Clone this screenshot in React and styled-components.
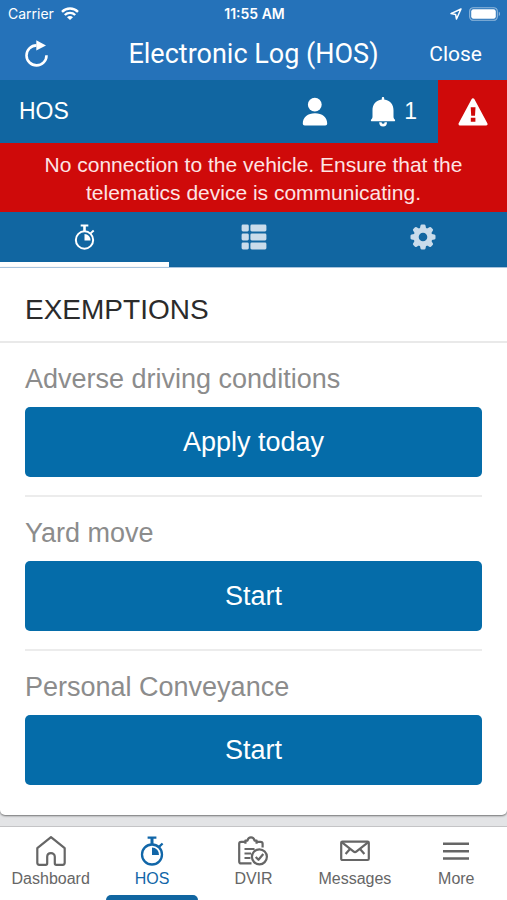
import { useState } from 'react';
import styled, { createGlobalStyle } from 'styled-components';

const exemptions = [
  { id: 'adverse', label: 'Adverse driving conditions', action: 'Apply today' },
  { id: 'yard', label: 'Yard move', action: 'Start' },
  { id: 'personal', label: 'Personal Conveyance', action: 'Start' }
];

const WifiIcon = () => (
  <svg width="18" height="13" viewBox="0 0 18 13" fill="none" stroke="#fff" strokeWidth="2.4" aria-hidden="true">
    <path d="M1 4.800a11.400 11.400 0 0 1 16 0" />
    <path d="M3.800 8a7.400 7.400 0 0 1 10.400 0" />
    <path d="M9 13 6 10.200a4.200 4.200 0 0 1 6 0z" fill="#fff" stroke="none" />
  </svg>
);

const LocationIcon = () => (
  <svg width="12" height="12" viewBox="0 0 12 12" fill="none" stroke="#fff" strokeWidth="1.5" strokeLinejoin="round" aria-hidden="true">
    <path d="M11 1 1 5.6l4.600.8.9 4.600z" />
  </svg>
);

const BatteryIcon = () => (
  <svg width="32" height="14" viewBox="0 0 32 14" aria-hidden="true">
    <rect x=".7" y=".7" width="27.6" height="12.6" rx="3.6" fill="none" stroke="#fff" strokeOpacity=".5" strokeWidth="1.1" />
    <rect x="2.2" y="2.2" width="24.6" height="9.6" rx="2.2" fill="#fff" />
    <path d="M29.8 4.8v4.4c1.6-.6 1.6-3.8 0-4.4z" fill="#fff" fillOpacity=".5" />
  </svg>
);

const ReloadIcon = () => (
  <svg width="24" height="28" viewBox="0 0 24 28" aria-hidden="true">
    <path d="M21.5 15.200A10 10 0 1 1 11.500 5.400" fill="none" stroke="#fff" strokeWidth="2.6" />
    <path d="M11.300.2 21 5.400 11.300 10.600z" fill="#fff" />
  </svg>
);

const PersonIcon = () => (
  <svg width="26" height="30" viewBox="0 0 26 30" fill="#fff" aria-hidden="true">
    <circle cx="12.800" cy="7.700" r="6.900" />
    <path d="M.8 26.600c0-6.600 5-10.400 12.200-10.400s12.200 3.800 12.200 10.400c0 1.300-.7 2-2 2H2.800c-1.300 0-2-.7-2-2z" />
  </svg>
);

const BellIcon = () => (
  <svg width="26" height="30" viewBox="0 0 26 30" fill="#fff" aria-hidden="true">
    <path d="M13 0c.7 0 1.200.5 1.200 1.200v1.200c6 .8 9.300 5 9.300 10.800v6.200c0 1.300.5 2.200 1.300 3 .7.800.3 1.800-.8 1.800H2c-1.100 0-1.500-1-.8-1.800.8-.8 1.300-1.700 1.300-3v-6.200c0-5.800 3.300-10 9.300-10.800V1.200C11.800.5 12.300 0 13 0z" />
    <path d="M9.200 25.200a3.900 4.200 0 0 0 7.800 0h-2.400a1.500 1.500 0 0 1-3 0z" />
  </svg>
);

const WarningIcon = () => (
  <svg width="30" height="28" viewBox="0 0 30 28" aria-hidden="true">
    <path d="M15 1.800 28 26H2z" fill="#fff" stroke="#fff" strokeWidth="3" strokeLinejoin="round" />
    <path d="M12.700 9.200h4.800l-.5 8.600h-3.800zM12.800 19.700h4.600v4h-4.600z" fill="#cf0a0a" />
  </svg>
);

const StopwatchIcon = ({ width, height }) => (
  <svg width={width} height={height} viewBox="0 0 24 30" fill="none" stroke="currentColor" strokeWidth="2.300" aria-hidden="true">
    <circle cx="12" cy="18.500" r="10" />
    <path d="M7.600 1.700h8.800M19 10.800l3.600-3.300" />
    <path d="M12 1.700v7" strokeWidth="3" />
    <path d="M12 11.500a7 7 0 0 1 7 7.500h-7z" fill="currentColor" stroke="none" />
  </svg>
);

const ListIcon = () => (
  <svg width="26" height="26" viewBox="0 0 26 26" fill="currentColor" aria-hidden="true">
    {[0.5, 9.5, 18.5].map(y => (
      <g key={y}>
        <rect x=".6" y={y} width="7.2" height="7" rx="1.400" />
        <rect x="9.4" y={y} width="16" height="7" rx="1.400" />
      </g>
    ))}
  </svg>
);

const GearIcon = () => (
  <svg width="26" height="26" viewBox="-13 -13 26 26" fill="currentColor" aria-hidden="true">
    <circle r="6.900" fill="none" stroke="currentColor" strokeWidth="5.200" />
    {[0, 45, 90, 135, 180, 225, 270, 315].map(angle => (
      <path key={angle} d="M-3.300-7.500-2.500-11.400Q-2.300-12.500-1.200-12.500H1.200Q2.300-12.500 2.500-11.400L3.300-7.500z" transform={`rotate(${angle})`} />
    ))}
  </svg>
);

const HomeIcon = () => (
  <svg width="30" height="30" viewBox="0 0 30 30" fill="none" stroke="currentColor" strokeWidth="2.2" strokeLinejoin="round" aria-hidden="true">
    <path d="M15 1.200 1.300 12.200v14.600c0 1.200.7 2 2 2h6.400c1 0 1.500-.6 1.500-1.500v-6.500c0-5 7.600-5 7.600 0v6.500c0 .9.500 1.500 1.500 1.500h6.400c1.300 0 2-.8 2-2V12.200z" />
  </svg>
);

const ClipboardIcon = () => (
  <svg width="30" height="30" viewBox="0 0 30 30" fill="none" stroke="currentColor" strokeWidth="2.2" strokeLinejoin="round" aria-hidden="true">
    <path d="M13.500 27.400H3.200c-1.200 0-2-.8-2-2V7.600c0-1.200.7-1.800 2-1.800h4.200V4.600h2c1.200-4.400 6-4.400 7.200 0h2v1.200h4c1.300 0 2 .6 2 1.800v4" />
    <path d="M7.400 5.800v2M18.600 5.800v2" />
    <path d="M6.500 13h10M6.500 17.500h6.500M6.500 22h6" />
    <circle cx="21.400" cy="20.800" r="7.500" />
    <path d="m17.700 21 2.800 2.800 4.800-5.800" />
  </svg>
);

const EnvelopeIcon = () => (
  <svg width="30" height="30" viewBox="0 0 30 30" fill="none" stroke="currentColor" strokeWidth="2.2" strokeLinejoin="round" aria-hidden="true">
    <rect x="1.200" y="5.600" width="27.600" height="18.400" rx="1.200" />
    <path d="m2 6.400 11.400 9c1.100.9 2.100.9 3.200 0L28 6.400M5.600 18l4.600-5.200M24.400 18l-4.600-5.200" />
  </svg>
);

const MenuIcon = () => (
  <svg width="30" height="30" viewBox="0 0 30 30" stroke="currentColor" strokeWidth="2.400" aria-hidden="true">
    <path d="M2 7.700h26M2 15.200h26M2 22.500h26" />
  </svg>
);

const tabs = [
  { id: 'exemptions', label: 'Exemptions', icon: <StopwatchIcon width={21} height={26} /> },
  { id: 'logs', label: 'Logs', icon: <ListIcon /> },
  { id: 'settings', label: 'Settings', icon: <GearIcon /> }
];

const navItems = [
  { label: 'Dashboard', icon: <HomeIcon /> },
  { label: 'HOS', icon: <StopwatchIcon width={24} height={30} />, active: true },
  { label: 'DVIR', icon: <ClipboardIcon /> },
  { label: 'Messages', icon: <EnvelopeIcon /> },
  { label: 'More', icon: <MenuIcon /> }
];

const App = () => {
  const [activeTab, setActiveTab] = useState('exemptions');

  return (
    <Page>
      <GlobalStyle />
      <TopArea>
        <StatusBar>
          <StatusGroup>
            Carrier <WifiIcon />
          </StatusGroup>
          <Clock>11:55 AM</Clock>
          <StatusGroup $end>
            <LocationIcon />
            <BatteryIcon />
          </StatusGroup>
        </StatusBar>
        <TitleBar>
          <IconButton aria-label="Reload">
            <ReloadIcon />
          </IconButton>
          <AppTitle>Electronic Log (HOS)</AppTitle>
          <CloseButton>Close</CloseButton>
        </TitleBar>
      </TopArea>

      <HosBar>
        <HosTitle>HOS</HosTitle>
        <HosActions>
          <IconButton aria-label="Driver">
            <PersonIcon />
          </IconButton>
          <IconButton aria-label="Notifications">
            <BellIcon /> 1
          </IconButton>
        </HosActions>
        <WarningButton aria-label="Warnings">
          <WarningIcon />
        </WarningButton>
      </HosBar>

      <Alert role="alert">
        No connection to the vehicle. Ensure that the telematics device is communicating.
      </Alert>

      <Tabs>
        {tabs.map(tab => (
          <Tab
            key={tab.id}
            aria-label={tab.label}
            $active={tab.id === activeTab}
            onClick={() => setActiveTab(tab.id)}
          >
            {tab.icon}
          </Tab>
        ))}
      </Tabs>

      <Content>
        <Card>
          <CardTitle>EXEMPTIONS</CardTitle>
          <CardBody>
            {exemptions.map(item => (
              <Exemption key={item.id}>
                <ExemptionLabel id={item.id}>{item.label}</ExemptionLabel>
                <ActionButton aria-describedby={item.id}>{item.action}</ActionButton>
              </Exemption>
            ))}
          </CardBody>
        </Card>
      </Content>

      <BottomNav>
        {navItems.map(item => (
          <NavLink key={item.label} href="#" $active={item.active}>
            {item.icon}
            {item.label}
          </NavLink>
        ))}
      </BottomNav>
    </Page>
  );
};

const GlobalStyle = createGlobalStyle`
  * {
    box-sizing: border-box;
  }

  body {
    margin: 0;
    font-family: 'Liberation Sans', Arial, sans-serif;
  }

  button {
    margin: 0;
    padding: 0;
    border: 0;
    background: none;
    color: inherit;
    font: inherit;
    cursor: pointer;
  }

  svg {
    display: block;
    flex: none;
  }
`;

const Page = styled.div`
  min-height: 100vh;
  display: flex;
  flex-direction: column;
  background: #e3e4e6;
`;

const TopArea = styled.header`
  background: #2572b9;
  color: #fff;
`;

const StatusBar = styled.div`
  display: grid;
  grid-template-columns: 1fr auto 1fr;
  align-items: center;
  height: 27px;
  padding: 0 6px 0 8px;
  font-family: Inter, sans-serif;
  font-size: 14px;
`;

const StatusGroup = styled.div`
  display: flex;
  align-items: center;
  gap: 7px;
  justify-content: ${props => (props.$end ? 'flex-end' : 'flex-start')};
`;

const Clock = styled.span`
  font-weight: 600;
`;

const TitleBar = styled.div`
  display: grid;
  grid-template-columns: 1fr auto 1fr;
  align-items: center;
  height: 53px;
  padding: 0 25px;
  font-family: Roboto, sans-serif;
`;

const IconButton = styled.button`
  display: flex;
  align-items: center;
  gap: 8px;
`;

const AppTitle = styled.h1`
  margin: 0;
  font-size: 27px;
  font-weight: 400;
  line-height: 32px;
`;

const CloseButton = styled.button`
  justify-self: end;
  font-size: 21px;
`;

const HosBar = styled.div`
  display: flex;
  align-items: stretch;
  height: 63px;
  padding-left: 19px;
  background: #1166a1;
  color: #fff;
  font-size: 23px;
`;

const HosTitle = styled.h2`
  flex: 1;
  align-self: center;
  margin: 0;
  font-size: 23px;
  font-weight: 400;
`;

const HosActions = styled.div`
  display: flex;
  gap: 42px;
  padding-right: 21px;
`;

const WarningButton = styled.button`
  display: flex;
  align-items: center;
  justify-content: center;
  width: 69px;
  background: #cf0a0a;
`;

const Alert = styled.p`
  margin: 0;
  padding: 8px 32px 5px;
  background: #cf0a0a;
  color: #fde4e4;
  font-size: 21px;
  line-height: 28px;
  text-align: center;
`;

const Tabs = styled.nav`
  display: grid;
  grid-template-columns: repeat(3, 1fr);
  height: 55px;
  background: #1166a1;
`;

const Tab = styled.button`
  display: flex;
  align-items: center;
  justify-content: center;
  border-bottom: 5px solid ${props => (props.$active ? '#fff' : 'transparent')};
  color: ${props => (props.$active ? '#fff' : '#cadceb')};
`;

const Content = styled.main`
  flex: 1;
  padding-bottom: 11px;
`;

const Card = styled.section`
  border-top: 1px solid #a9c4de;
  border-radius: 0 0 5px 5px;
  background: #fff;
  box-shadow: 0 1px 2px rgba(0, 0, 0, 0.5);
`;

const CardTitle = styled.h3`
  margin: 0;
  padding: 26px 25px 15px;
  border-bottom: 2px solid #e9e9e9;
  color: #2b2b2b;
  font-size: 28px;
  font-weight: 400;
  line-height: 32px;
`;

const CardBody = styled.div`
  padding: 0 25px 10px;
`;

const Exemption = styled.div`
  padding: 22px 0 18px;
  border-bottom: 2px solid #ececec;

  &:last-child {
    border-bottom-color: transparent;
  }
`;

const ExemptionLabel = styled.p`
  margin: 0 0 14px;
  color: #8c8c8c;
  font-size: 27px;
  line-height: 28px;
`;

const ActionButton = styled.button`
  width: 100%;
  height: 70px;
  border-radius: 5px;
  background: #056ca9;
  color: #fff;
  font-size: 27px;
`;

const BottomNav = styled.nav`
  display: grid;
  grid-template-columns: repeat(5, 1fr);
  height: 74px;
  border-top: 1px solid #c4c4c6;
  background: #fff;
`;

const NavLink = styled.a`
  position: relative;
  display: flex;
  flex-direction: column;
  align-items: center;
  gap: 3px;
  padding-top: 9px;
  color: ${props => (props.$active ? '#1166a8' : '#666')};
  font-size: 16px;
  line-height: 20px;
  text-decoration: none;

  &::after {
    content: '';
    position: absolute;
    right: 5px;
    bottom: 0;
    left: 5px;
    display: ${props => (props.$active ? 'block' : 'none')};
    height: 5px;
    border-radius: 5px 5px 0 0;
    background: #1166a1;
  }
`;

export default App;
